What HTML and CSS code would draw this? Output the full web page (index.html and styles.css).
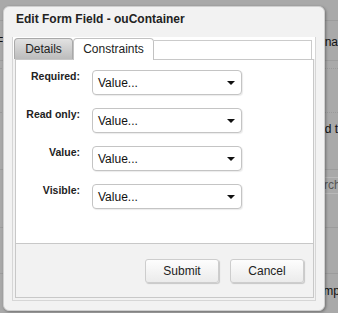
FILE: index.html
```html
<!DOCTYPE html>
<html lang="en">
<head>
  <meta charset="UTF-8" />
  <title>Edit Form Field</title>
  <link rel="stylesheet" href="styles.css">
</head>
<body>

  <!-- Page behind the dialog (dimmed) -->
  <div class="page">
    <div class="bg-row bg-head"></div>
    <div class="bg-row bg-title"><span class="bg-left">F</span><span class="bg-right">ona</span></div>
    <div class="bg-row bg-dotted bg-thin"></div>
    <div class="bg-row bg-dotted bg-tall"></div>
    <div class="bg-row bg-text"><span class="bg-right">d t</span></div>
    <div class="bg-row bg-searchrow"><span class="bg-search">rch</span></div>
    <div class="bg-row bg-mid"></div>
    <div class="bg-row bg-last"><span class="bg-right bg-mp">mp</span></div>
  </div>

  <!-- Modal dialog -->
  <div class="dialog">
    <div class="dialog-title">Edit Form Field - ouContainer</div>

    <div class="tabs">
      <div class="tab-bar">
        <div class="tab">Details</div>
        <div class="tab tab-active">Constraints</div>
        <div class="tab-fill"></div>
      </div>

      <div class="tab-body">
        <div class="panel">
          <div class="fields">
            <div class="field-label">Required:</div>
            <div class="select"><span>Value...</span><svg width="8" height="4" viewBox="0 0 8 4"><polygon points="0,0 8,0 4,4" fill="#111"/></svg></div>

            <div class="field-label">Read only:</div>
            <div class="select"><span>Value...</span><svg width="8" height="4" viewBox="0 0 8 4"><polygon points="0,0 8,0 4,4" fill="#111"/></svg></div>

            <div class="field-label">Value:</div>
            <div class="select"><span>Value...</span><svg width="8" height="4" viewBox="0 0 8 4"><polygon points="0,0 8,0 4,4" fill="#111"/></svg></div>

            <div class="field-label">Visible:</div>
            <div class="select"><span>Value...</span><svg width="8" height="4" viewBox="0 0 8 4"><polygon points="0,0 8,0 4,4" fill="#111"/></svg></div>
          </div>
        </div>

        <div class="footer">
          <button class="btn">Submit</button>
          <button class="btn">Cancel</button>
        </div>
      </div>
    </div>
  </div>

</body>
</html>
```

FILE: styles.css
```css
* {
  box-sizing: border-box;
}

body {
  margin: 0;
  height: 313px;
  overflow: hidden;
  position: relative;
  background: #a9a9a9;
  font-family: "Liberation Sans", Arial, sans-serif;
  color: #222;
}

/* dimmed page behind */
.page {
  width: 100%;
}

.bg-row {
  display: flex;
  align-items: center;
  white-space: nowrap;
  overflow: hidden;
  font-size: 12px;
  color: #111;
  border-bottom: 1px solid #9c9c9c;
}

.bg-head { height: 21px; }
.bg-title { height: 40px; padding-top: 2px; }
.bg-dotted { border-bottom: 1px dotted #9a9a9a; }
.bg-thin { height: 8px; }
.bg-tall { height: 44px; }
.bg-text { height: 57px; align-items: flex-start; padding-top: 9px; }
.bg-searchrow { height: 58px; align-items: flex-start; padding-top: 7px; }
.bg-mid { height: 46px; }
.bg-last { height: 40px; border-bottom: none; align-items: flex-start; padding-top: 10px; }

.bg-left {
  margin-left: -4px;
}

.bg-right {
  margin-left: auto;
  margin-right: 0;
}

.bg-mp {
  margin-right: -2px;
}

.bg-search {
  margin-left: auto;
  margin-right: -30px;
  width: 48px;
  height: 17px;
  line-height: 15px;
  padding-left: 3px;
  border: 1px solid #b9b9b9;
  color: #555;
}

/* dialog */
.dialog {
  position: absolute;
  left: 3px;
  top: 6px;
  width: 322px;
  height: 305px;
  background: #f2f2f2;
  border: 1px solid #cfcfcf;
  border-radius: 6px;
  box-shadow: 1px 1px 3px rgba(0, 0, 0, 0.35);
  display: flex;
  flex-direction: column;
}

.dialog-title {
  height: 30px;
  padding: 5px 12px 0;
  font-size: 12px;
  line-height: 14px;
  font-weight: bold;
  color: #222;
}

.tabs {
  margin: 0 8px;
  height: 264px;
  padding: 1px 1px 2px;
  border: 1px solid #d6d6d6;
  border-top: none;
  background: linear-gradient(#fff 0, #fff 22px, #f2f2f2 22px);
  display: flex;
  flex-direction: column;
}

.tab-bar {
  display: flex;
  height: 21px;
}

.tab {
  width: 59px;
  height: 21px;
  font-size: 12px;
  line-height: 20px;
  text-align: center;
  color: #222;
  border: 1px solid #a9a9a9;
  border-bottom: none;
  border-radius: 4px 4px 0 0;
  background: linear-gradient(#e2e2e2, #bcbcbc);
}

.tab-active {
  width: 81px;
  height: 22px;
  margin-bottom: -1px;
  position: relative;
  z-index: 1;
  background: #fff;
  border-color: #c2c2c2;
}

.tab-fill {
  flex: 1;
  margin-top: 2px;
  margin-right: 2px;
  border-top: 1px solid #cbcbcb;
  border-right: 1px solid #cbcbcb;
}

.tab-body {
  flex: 1;
  margin-left: 1px;
  border: 1px solid #c8c8c8;
  display: flex;
  flex-direction: column;
}

.panel {
  height: 184px;
  padding-top: 10px;
  background: #fff;
  border-bottom: 1px solid #c8c8c8;
}

.fields {
  display: grid;
  grid-template-columns: 64px 150px;
  column-gap: 12px;
  row-gap: 13px;
}

.field-label {
  text-align: right;
  font-size: 10.5px;
  line-height: 13px;
  font-weight: bold;
  padding-top: 0;
  color: #222;
}

.select {
  height: 25px;
  display: flex;
  align-items: center;
  justify-content: space-between;
  padding: 0 6px 0 5px;
  font-size: 12px;
  color: #111;
  background: #fff;
  border: 1px solid #c4c4c4;
  border-radius: 4px;
  box-shadow: 1px 1px 1px rgba(0, 0, 0, 0.08);
}

.footer {
  flex: 1;
  display: flex;
  justify-content: flex-end;
  align-items: flex-start;
  gap: 11px;
  padding: 15px 9px 0 0;
}

.btn {
  width: 74px;
  height: 24px;
  padding: 0;
  font-family: inherit;
  font-size: 12px;
  color: #222;
  background: linear-gradient(#fdfdfd, #ebebeb);
  border: 1px solid #cdcdcd;
  border-radius: 3px;
  box-shadow: 1px 1px 1px rgba(0, 0, 0, 0.18);
}
```
